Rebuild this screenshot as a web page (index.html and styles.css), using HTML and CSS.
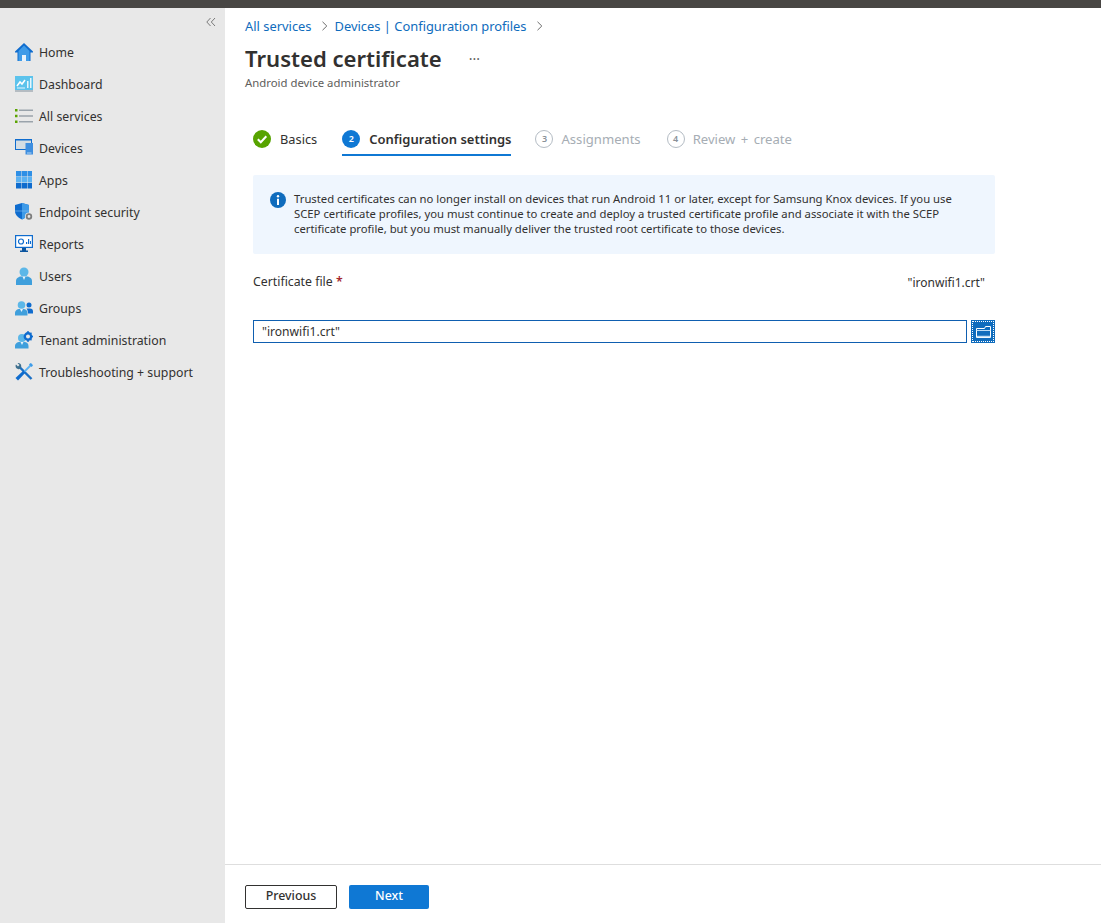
FILE: index.html
```html
<!DOCTYPE html>
<html lang="en">
<head>
    <meta charset="UTF-8">
    <meta name="viewport" content="width=device-width, initial-scale=1.0">
    <title>Trusted certificate</title>
    <link rel="stylesheet" href="styles.css">
</head>
<body>
    <div class="topbar"></div>
    <div class="shell">
        <nav class="sidebar">
            <div class="collapse">
                <svg width="10" height="10" viewBox="0 0 10 10" fill="none" stroke="#7a7a7a" stroke-width="1"><path d="M4.5 1 .8 5l3.7 4M9 1 5.300 5 9 9"/></svg>
            </div>
            <a class="navitem" href="#">
                <svg width="18" height="18" viewBox="0 0 18 18"><path d="M9 0 0 8.500v1h2.500V18h13V9.500H18v-1z" fill="#0f6cce"/><path d="M9 2.500 3.500 8V18h11V8z" fill="#3f9be8"/><path d="M7 12h4v6H7z" fill="#e8f2fb"/></svg>
                Home
            </a>
            <a class="navitem" href="#">
                <svg width="18" height="18" viewBox="0 0 18 18"><path d="M0 1h18v14H0z" fill="#5cc3ec"/><path d="M0 15h18v2H0z" fill="#b5bcc2"/><path d="M2 11l3-4 2 2 3-4" fill="none" stroke="#fff" stroke-width="1.500"/><path d="M12 6h1.500v7H12zM15 3h1.500v10H15zM2 12.500h8v1H2z" fill="#e6f6fd"/></svg>
                Dashboard
            </a>
            <a class="navitem" href="#">
                <svg width="18" height="18" viewBox="0 0 18 18"><path d="M0 2h2.500v2.500H0zM0 7.800h2.500v2.500H0zM0 13.500h2.500V16H0z" fill="#5ba300"/><path d="M4 2.500h14v1.500H4zM4 8.300h14v1.500H4zM4 14h14v1.500H4z" fill="#9aa3ab"/></svg>
                All services
            </a>
            <a class="navitem" href="#">
                <svg width="18" height="18" viewBox="0 0 18 18"><path d="M0 0h17v11H0z" fill="#0f6cce"/><path d="M1 1.500h15V10H1z" fill="#d5dde3"/><path d="M10.500 4H18v11.500h-7.500z" fill="#3f8fe0"/><path d="M12 13.500h4.500v1H12z" fill="#b7d6f4"/></svg>
                Devices
            </a>
            <a class="navitem" href="#">
                <svg width="18" height="18" viewBox="0 0 18 18"><path d="M1 0h5v5.500H1zM6.500 0H12v5.500H6.500zM12.500 0H17v5.500h-4.500z" fill="#2e8fe6"/><path d="M1 6h5v5.500H1zM6.500 6H12v5.500H6.500zM12.500 6H17v5.500h-4.500z" fill="#5cb2f2"/><path d="M1 12h5v5.500H1zM6.500 12H12v5.500H6.500zM12.500 12H17v5.500h-4.500z" fill="#0f6cce"/></svg>
                Apps
            </a>
            <a class="navitem" href="#">
                <svg width="18" height="18" viewBox="0 0 18 18"><path d="M0 2 7 0l7 2v6c0 4-3 6.500-7 8.500C3 14.500 0 12 0 8z" fill="#0f6cce"/><path d="M7 0l7 2v6c0 4-3 6.500-7 8.500z" fill="#3f9be8"/><path d="M0 8h14" stroke="#8cc4f0" stroke-width=".6"/><circle cx="14" cy="13.500" r="4" fill="#e8e8e8"/><circle cx="14" cy="13.500" r="2.300" fill="none" stroke="#7d7d7d" stroke-width="1.800"/></svg>
                Endpoint security
            </a>
            <a class="navitem" href="#">
                <svg width="18" height="18" viewBox="0 0 18 18"><path d="M0 0h18v13H0z" fill="#0f6cce"/><path d="M1.200 1.200h15.600v10.600H1.200z" fill="#fff"/><circle cx="6" cy="6.500" r="2.500" fill="none" stroke="#0f6cce" stroke-width="1.200"/><path d="M11 9V7h1.200v2zM13 9V4h1.200v5zM15 9V6h1v3z" fill="#0f6cce"/><path d="M7 13h4v2.500h2V17H5v-1.500h2z" fill="#0b559f"/></svg>
                Reports
            </a>
            <a class="navitem" href="#">
                <svg width="18" height="18" viewBox="0 0 18 18"><circle cx="9" cy="5" r="4.500" fill="#5cb7e8"/><path d="M1 18v-4c0-3 3-4.500 5-4.500h6c2 0 5 1.500 5 4.500v4z" fill="#3f9fdc"/><path d="M7.500 9.500h3L9 13z" fill="#e8f4fb"/></svg>
                Users
            </a>
            <a class="navitem" href="#">
                <svg width="18" height="18" viewBox="0 0 18 18"><circle cx="6.500" cy="6" r="3.800" fill="#5cb7e8"/><path d="M0 16.500V14c0-2.500 2.500-4 4.500-4h4c2 0 4 1.500 4 4v2.500z" fill="#3f9fdc"/><path d="M5 10h3L6.500 13z" fill="#e8f4fb"/><circle cx="14" cy="6" r="2.500" fill="#0f6cce"/><path d="M11.500 9.500H15c2 0 3 1 3 3v2h-5c0-2-.5-4-1.500-5z" fill="#0f6cce"/></svg>
                Groups
            </a>
            <a class="navitem" href="#">
                <svg width="18" height="18" viewBox="0 0 18 18"><circle cx="7" cy="7" r="4" fill="#5cb7e8"/><path d="M0 17.500V15c0-2.500 2.500-4 4.500-4h5c2 0 4 1.500 4 4v2.500z" fill="#3f9fdc"/><path d="M5.500 11h3L7 14z" fill="#e8f4fb"/><circle cx="13" cy="5.500" r="3.200" fill="none" stroke="#0f6cce" stroke-width="2.400"/><path d="M12.300 0h1.400v2h-1.400zM12.300 9h1.400v2h-1.400zM16.500 4.800H18v1.400h-1.500zM16 1.200l1 1-1.400 1.400-1-1zM15.600 7.400 17 8.800l-1 1-1.400-1.400z" fill="#0f6cce"/></svg>
                Tenant administration
            </a>
            <a class="navitem" href="#">
                <svg width="18" height="18" viewBox="0 0 18 18" fill="none"><path d="M4 3.500 16.500 16" stroke="#1a6fc4" stroke-width="2.400"/><path d="M1 1.500 3 3.500 4.500 2 2.500 0C5 -.5 7 2 6 4.500L4.500 6C2 7 -.5 4 1 1.500z" fill="#3d6f8e"/><path d="M17 1 9 9" stroke="#5cb2f2" stroke-width="1.800"/><path d="M8.500 7.500 10.500 9.500 3 17.500 .5 15z" fill="#0f6cce"/><path d="M15.500 0 18 2.500 16.500 4 14 1.500z" fill="#3f9be8"/></svg>
                Troubleshooting + support
            </a>
        </nav>
        <main class="content">
            <div class="page">
                <div class="crumbs">
                    <a href="#">All services</a>
                    <svg class="crumbsep" width="8" height="10" viewBox="0 0 8 10" fill="none" stroke="#6b6b6b"><path d="m1.500.8 4.300 4.200-4.300 4.200"/></svg>
                    <a href="#">Devices | Configuration profiles</a>
                    <svg class="crumbsep" width="8" height="10" viewBox="0 0 8 10" fill="none" stroke="#6b6b6b"><path d="m1.500.8 4.300 4.200-4.300 4.200"/></svg>
                </div>
                <div class="titlerow">
                    <h1>Trusted certificate</h1>
                    <span class="more">···</span>
                </div>
                <p class="subtitle">Android device administrator</p>

                <div class="steps">
                    <div class="step">
                        <svg width="18" height="18" viewBox="0 0 18 18"><circle cx="9" cy="9" r="9" fill="#57a300"/><path d="m4.800 9.300 3 3 5.500-6" fill="none" stroke="#fff" stroke-width="2"/></svg>
                        <span>Basics</span>
                    </div>
                    <div class="step step-active">
                        <span class="num">2</span>
                        <span>Configuration settings</span>
                    </div>
                    <div class="step step-off">
                        <span class="num">3</span>
                        <span>Assignments</span>
                    </div>
                    <div class="step step-off">
                        <span class="num">4</span>
                        <span>Review + create</span>
                    </div>
                </div>

                <div class="infobox">
                    <svg width="16" height="16" viewBox="0 0 16 16"><circle cx="8" cy="8" r="8" fill="#0f6cbd"/><path d="M7 6.800h2V13H7z" fill="#fff"/><circle cx="8" cy="4.300" r="1.200" fill="#fff"/></svg>
                    <p>Trusted certificates can no longer install on devices that run Android 11 or later, except for Samsung Knox devices. If you use SCEP certificate profiles, you must continue to create and deploy a trusted certificate profile and associate it with the SCEP certificate profile, but you must manually deliver the trusted root certificate to those devices.</p>
                </div>

                <div class="fieldrow">
                    <label class="fieldlabel">Certificate file <span class="req">*</span></label>
                    <span class="fieldvalue">"ironwifi1.crt"</span>
                </div>
                <div class="filerow">
                    <input class="fileinput" type="text" value="&quot;ironwifi1.crt&quot;">
                    <button class="filebtn" type="button">
                        <svg width="15" height="12" viewBox="0 0 15 12" fill="none" stroke="#fff"><path d="M.5 2.500h8l1-2h5v11H.5z" fill="#0f6cbd"/><path d="M.5 4.500h14" stroke="#bcdcf5"/><path d="M1 10.500h13" stroke="#bcdcf5" stroke-width="1.500"/></svg>
                    </button>
                </div>
            </div>
            <footer class="footer">
                <button class="btn btn-prev" type="button">Previous</button>
                <button class="btn btn-next" type="button">Next</button>
            </footer>
        </main>
    </div>
</body>
</html>
```

FILE: styles.css
```css
* {
	margin: 0px;
	padding: 0px;
	box-sizing: border-box;
}
body {
	height: 923px;
	display: flex;
	flex-direction: column;
	overflow: hidden;
	font-family: "Noto Sans", "Open Sans", sans-serif;
	font-size: 12.3px;
	color: #323130;
	background-color: white;
}
a {
	text-decoration: none;
}
.topbar {
	height: 8px;
	background-color: #484644;
}
.shell {
	flex: 1;
	display: flex;
	min-height: 0;
}

/* left nav */
.sidebar {
	width: 225px;
	background-color: #e8e8e8;
}
.collapse {
	height: 28px;
	display: flex;
	justify-content: flex-end;
	align-items: center;
	padding-right: 9px;
}
.navitem {
	height: 32px;
	display: flex;
	align-items: center;
	gap: 6px;
	padding-left: 15px;
	color: #323130;
}
.navitem svg {
	flex-shrink: 0;
}

/* main column */
.content {
	flex: 1;
	display: flex;
	flex-direction: column;
}
.page {
	flex: 1;
	padding: 10px 106px 0 20px;
}
.crumbs {
	display: flex;
	align-items: center;
	height: 16px;
	font-size: 12.900px;
}
.crumbs a {
	color: #0f6cbd;
}
.crumbsep {
	margin: 0 6px 0 9px;
}
.titlerow {
	display: flex;
	align-items: center;
	margin-top: 8px;
	height: 32px;
}
h1 {
	font-size: 22.100px;
	font-weight: 600;
	color: #323130;
}
.more {
	margin-left: 27px;
	font-size: 14px;
	color: #605e5c;
}
.subtitle {
	margin-top: 1px;
	font-size: 11.350px;
	line-height: 16px;
	color: #605e5c;
}

/* wizard steps */
.steps {
	display: flex;
	gap: 24px;
	margin-top: 32px;
	padding-left: 8px;
}
.step {
	display: flex;
	align-items: center;
	gap: 9px;
	height: 33px;
	padding-bottom: 2px;
	font-size: 12.800px;
}
.step-active {
	margin-left: 1px;
	font-weight: 600;
	padding-bottom: 0;
	border-bottom: 2px solid #0f78d4;
	color: #323130;
	font-size: 13px;
}
.step-off {
	gap: 8px;
	font-size: 13.100px;
	word-spacing: 2px;
	color: #a6adb4;
}
.step-off + .step-off {
	margin-left: 2px;
}
.num {
	width: 18px;
	height: 18px;
	border-radius: 50%;
	display: grid;
	place-items: center;
	font-size: 9px;
	font-weight: 600;
}
.step-active .num {
	background-color: #0f78d4;
	color: white;
}
.step-off .num {
	border: 1px solid #b4bcc4;
	color: #8a9199;
}

/* info banner */
.infobox {
	display: flex;
	gap: 8px;
	margin: 19px 0 0 8px;
	padding: 16px 40px 18px 17px;
	background-color: #eff6fe;
	border-radius: 2px;
	font-size: 11.300px;
	line-height: 15px;
	height: 79px;
}
.infobox svg {
	flex-shrink: 0;
	margin-top: 1px;
}

/* cert field */
.fieldrow {
	display: flex;
	justify-content: space-between;
	margin: 19px 0 0 8px;
	padding-right: 10px;
	height: 47px;
	line-height: 18px;
}
.req {
	color: #a4262c;
	font-weight: 600;
}
.fieldvalue {
	font-size: 12px;
	padding-top: 1px;
}
.filerow {
	display: flex;
	gap: 4px;
	margin-left: 8px;
}
.fileinput {
	flex: 1;
	height: 23px;
	padding: 0 8px;
	border: 1px solid #0f5fb0;
	outline: none;
	font-family: inherit;
	font-size: 12.100px;
	color: #323130;
}
.filebtn {
	width: 24px;
	height: 23px;
	display: grid;
	place-items: center;
	background-color: #0f6cbd;
	border: none;
	outline: 1px dotted white;
	outline-offset: -2px;
}

/* bottom bar */
.footer {
	height: 59px;
	display: flex;
	gap: 12px;
	padding: 20px 20px 0;
	border-top: 1px solid #dedede;
}
.btn {
	height: 24px;
	padding-bottom: 4px;
	border-radius: 2px;
	font-family: inherit;
	font-size: 12.400px;
	font-weight: 500;
}
.btn-prev {
	width: 92px;
	background-color: white;
	border: 1px solid #323130;
	color: #323130;
}
.btn-next {
	width: 80px;
	background-color: #0f78d4;
	border: none;
	color: white;
}
```
